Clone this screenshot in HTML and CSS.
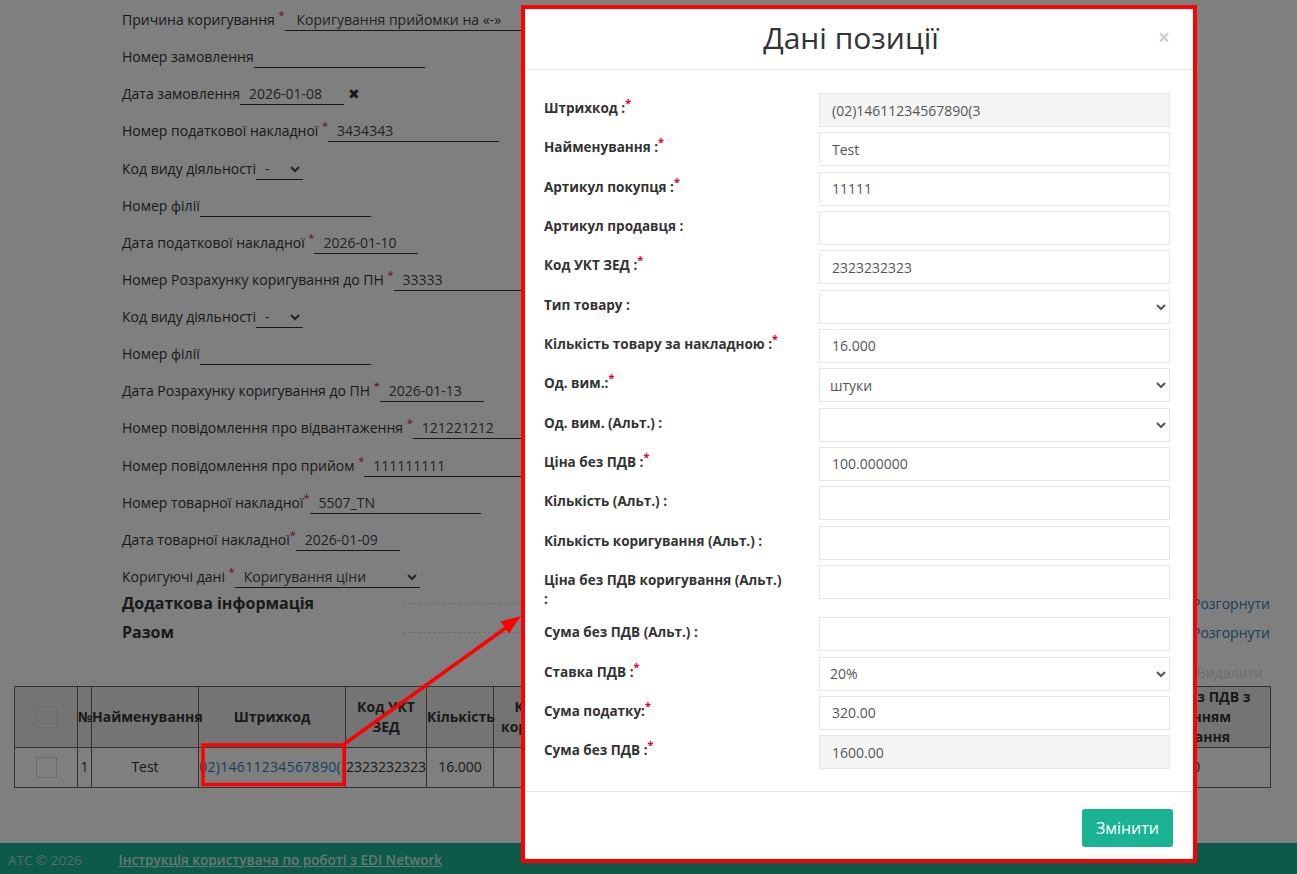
FILE: index.html
```html
<!DOCTYPE html>
<html lang="uk">
<head>
    <meta charset="UTF-8">
    <meta name="viewport" content="width=device-width, initial-scale=1.0">
    <title>Коригування - Дані позиції</title>
    <link rel="stylesheet" href="styles.css">
</head>
<body>
    <div class="page">
        <form class="doc-form">
            <div class="field"><label>Причина коригування <sup class="req">*</sup></label><input class="line-input input-wide" type="text" value="Коригування прийомки на «-»"></div>
            <div class="field"><label>Номер замовлення</label><input class="line-input input-text" type="text" value=""></div>
            <div class="field"><label>Дата замовлення</label><input class="line-input input-date" type="text" value="2026-01-08"><span class="clear-date">✖</span></div>
            <div class="field"><label>Номер податкової накладної <sup class="req">*</sup></label><input class="line-input input-text" type="text" value="3434343"></div>
            <div class="field"><label>Код виду діяльності</label><select class="line-select select-code"><option>-</option></select></div>
            <div class="field"><label>Номер філії</label><input class="line-input input-text" type="text" value=""></div>
            <div class="field"><label>Дата податкової накладної <sup class="req">*</sup></label><input class="line-input input-date" type="text" value="2026-01-10"></div>
            <div class="field"><label>Номер Розрахунку коригування до ПН <sup class="req">*</sup></label><input class="line-input input-text" type="text" value="33333"></div>
            <div class="field"><label>Код виду діяльності</label><select class="line-select select-code"><option>-</option></select></div>
            <div class="field"><label>Номер філії</label><input class="line-input input-text" type="text" value=""></div>
            <div class="field"><label>Дата Розрахунку коригування до ПН <sup class="req">*</sup></label><input class="line-input input-date" type="text" value="2026-01-13"></div>
            <div class="field"><label>Номер повідомлення про відвантаження <sup class="req">*</sup></label><input class="line-input input-text" type="text" value="121221212"></div>
            <div class="field"><label>Номер повідомлення про прийом <sup class="req">*</sup></label><input class="line-input input-text" type="text" value="111111111"></div>
            <div class="field"><label>Номер товарної накладної<sup class="req">*</sup></label><input class="line-input input-text" type="text" value="5507_TN"></div>
            <div class="field"><label>Дата товарної накладної<sup class="req">*</sup></label><input class="line-input input-date" type="text" value="2026-01-09"></div>
            <div class="field"><label>Коригуючі дані <sup class="req">*</sup></label><select class="line-select select-corr"><option>Коригування ціни</option></select></div>
        </form>

        <div class="section-row">
            <h4>Додаткова інформація</h4>
            <span class="dash"></span>
            <a href="#">Розгорнути</a>
        </div>
        <div class="section-row">
            <h4>Разом</h4>
            <span class="dash"></span>
            <a href="#">Розгорнути</a>
        </div>

        <div class="table-actions">
            <span class="delete-link">
                <svg width="10" height="12" viewBox="0 0 10 12"><path d="M1 3h8M3.5 3V1.5h3V3M2 3l.6 8h4.8L8 3" fill="none" stroke="currentColor" stroke-width="1.2"/></svg>Видалити
            </span>
        </div>

        <table class="items">
            <colgroup>
                <col style="width:63px"><col style="width:14px"><col style="width:107px"><col style="width:147px">
                <col style="width:81px"><col style="width:67px"><col style="width:110px"><col style="width:110px">
                <col style="width:110px"><col style="width:110px"><col style="width:81px"><col style="width:80px"><col style="width:176px">
            </colgroup>
            <thead>
                <tr>
                    <th><span class="check"></span></th>
                    <th>№</th>
                    <th>Найменування</th>
                    <th>Штрихкод</th>
                    <th>Код УКТ ЗЕД</th>
                    <th>Кількість</th>
                    <th>Кількість коригування</th>
                    <th>Ціна без ПДВ</th>
                    <th>Ціна коригування</th>
                    <th>Сума без ПДВ</th>
                    <th>Ставка ПДВ</th>
                    <th>Сума ПДВ</th>
                    <th>Вартість без ПДВ з урахуванням коригування</th>
                </tr>
            </thead>
            <tbody>
                <tr>
                    <td><span class="check"></span></td>
                    <td>1</td>
                    <td>Test</td>
                    <td><div class="barcode"><a href="#">(02)14611234567890(3</a></div></td>
                    <td>2323232323</td>
                    <td>16.000</td>
                    <td>0</td>
                    <td>100.000000</td>
                    <td>0</td>
                    <td>1600.00</td>
                    <td>20%</td>
                    <td>320.00</td>
                    <td>0.000</td>
                </tr>
            </tbody>
        </table>
    </div>

    <footer class="site-footer">
        <span class="copy">АТС © 2026</span>
        <a href="#">Інструкція користувача по роботі з EDI Network</a>
    </footer>

    <div class="backdrop"></div>

    <svg class="annotation" width="1297" height="874" viewBox="0 0 1297 874">
        <rect x="203" y="745" width="141" height="39.5" fill="none" stroke="#ff0000" stroke-width="3.5"/>
        <line x1="343" y1="745" x2="507" y2="627" stroke="#ff0000" stroke-width="3.5"/>
        <polygon points="521,616 509,633.5 500.5,621.5" fill="#ff0000"/>
    </svg>

    <div class="modal">
        <div class="modal-header">
            <h4 class="modal-title">Дані позиції</h4>
            <button class="close" type="button">×</button>
        </div>
        <div class="modal-body">
            <label>Штрихкод :<sup class="req">*</sup></label>
            <input class="form-control" type="text" value="(02)14611234567890(3" readonly>

            <label>Найменування :<sup class="req">*</sup></label>
            <input class="form-control" type="text" value="Test">

            <label>Артикул покупця :<sup class="req">*</sup></label>
            <input class="form-control" type="text" value="11111">

            <label>Артикул продавця :</label>
            <input class="form-control" type="text" value="">

            <label>Код УКТ ЗЕД :<sup class="req">*</sup></label>
            <input class="form-control" type="text" value="2323232323">

            <label>Тип товару :</label>
            <select class="form-control"><option></option></select>

            <label>Кількість товару за накладною :<sup class="req">*</sup></label>
            <input class="form-control" type="text" value="16.000">

            <label>Од. вим.:<sup class="req">*</sup></label>
            <select class="form-control"><option>штуки</option></select>

            <label>Од. вим. (Альт.) :</label>
            <select class="form-control"><option></option></select>

            <label>Ціна без ПДВ :<sup class="req">*</sup></label>
            <input class="form-control" type="text" value="100.000000">

            <label>Кількість (Альт.) :</label>
            <input class="form-control" type="text" value="">

            <label>Кількість коригування (Альт.) :</label>
            <input class="form-control" type="text" value="">

            <label>Ціна без ПДВ коригування (Альт.) :</label>
            <input class="form-control" type="text" value="">

            <label>Сума без ПДВ (Альт.) :</label>
            <input class="form-control" type="text" value="">

            <label>Ставка ПДВ :<sup class="req">*</sup></label>
            <select class="form-control"><option>20%</option></select>

            <label>Сума податку:<sup class="req">*</sup></label>
            <input class="form-control" type="text" value="320.00">

            <label>Сума без ПДВ :<sup class="req">*</sup></label>
            <input class="form-control" type="text" value="1600.00" readonly>
        </div>
        <div class="modal-footer">
            <button class="btn-primary" type="button">Змінити</button>
        </div>
    </div>
</body>
</html>
```

FILE: styles.css
```css
body {
    margin: 0;
    font-family: "Open Sans", "Liberation Sans", sans-serif;
    font-size: 14px;
    color: #333;
    background-color: #fff;
    height: 874px;
    overflow: hidden;
}

.page {
    padding: 8px 27px 0 14px;
}

/* document header form */
.doc-form {
    margin: 0 0 0 108px;
    display: flex;
    flex-direction: column;
    gap: 13.13px;
}

.field {
    display: flex;
    align-items: center;
    height: 24px;
}

.field label {
    white-space: nowrap;
    line-height: 20px;
}

.req {
    color: #e4002b;
    font-size: 11px;
    line-height: 0;
    vertical-align: 6px;
}

.field .req {
    color: #d0105a;
}

.line-input,
.line-select {
    font-family: inherit;
    font-size: 14px;
    color: #444;
    height: 22px;
    border: 0;
    border-bottom: 1px solid #333;
    border-radius: 0;
    background: transparent;
    box-sizing: border-box;
    outline: none;
    margin: 0;
}

.line-input {
    padding: 0 0 0 9px;
}

.line-select {
    padding: 0 0 0 5px;
}

.input-wide { width: 300px; padding-left: 12px; }
.input-text { width: 171px; }
.input-date { width: 104px; }
.select-code { width: 47px; }
.select-corr { width: 185px; }

.clear-date {
    margin-left: 4px;
    font-family: "DejaVu Sans", sans-serif;
    font-size: 14px;
    color: #333;
}

.section-row {
    display: flex;
    align-items: center;
    height: 29px;
    margin-left: 108px;
}

.section-row h4 {
    margin: 0;
    width: 281px;
    font-size: 16px;
    font-weight: 700;
}

.section-row .dash {
    flex: 1;
    border-top: 1px dashed #ddd;
    margin-right: 8px;
}

.section-row a {
    color: #337ab7;
    text-decoration: none;
}

.table-actions {
    display: flex;
    justify-content: flex-end;
    align-items: center;
    height: 20px;
    margin-top: 16px;
    padding-right: 7px;
}

.delete-link {
    color: #ddd;
    display: flex;
    align-items: center;
    gap: 1px;
}

/* items table */
.items {
    width: 100%;
    margin-top: 3px;
    border-collapse: collapse;
    table-layout: fixed;
}

.items th,
.items td {
    border: 1px solid #666;
    padding: 0;
    text-align: center;
    line-height: 20px;
}

.items th {
    height: 57px;
    background-color: #e8e8e8;
    font-weight: 700;
}

.items td {
    height: 39px;
    white-space: nowrap;
    overflow: hidden;
    color: #333;
}

.check {
    display: inline-block;
    width: 19px;
    height: 19px;
    border: 1px solid #ddd;
    vertical-align: middle;
}

.barcode {
    display: flex;
    justify-content: center;
    overflow: hidden;
}

.barcode a {
    color: #337ab7;
    text-decoration: none;
    letter-spacing: 0.3px;
    flex-shrink: 0;
}

.site-footer {
    margin-top: 55px;
    height: 34px;
    background-color: #1ab394;
    display: flex;
    align-items: center;
    padding: 0 8px;
    font-size: 13.5px;
}

.site-footer .copy {
    color: rgba(255, 255, 255, 0.6);
}

.site-footer a {
    margin-left: 37px;
    color: rgba(255, 255, 255, 0.8);
    font-weight: 600;
}

/* modal */
.backdrop {
    position: fixed;
    top: 0;
    left: 0;
    right: 0;
    bottom: 0;
    background-color: rgba(0, 0, 0, 0.5);
    z-index: 10;
}

.annotation {
    position: fixed;
    top: 0;
    left: 0;
    z-index: 15;
}

.modal {
    position: fixed;
    top: 5px;
    left: 521px;
    width: 676px;
    box-sizing: border-box;
    border: 4px solid #ff0000;
    background-color: #fff;
    z-index: 20;
}

.modal-header {
    display: flex;
    align-items: center;
    padding: 12px 23px 15px 19px;
    border-bottom: 1px solid #e5e5e5;
}

.modal-title {
    flex: 1;
    margin: 0;
    text-align: center;
    font-size: 30px;
    font-weight: 400;
    line-height: 33px;
    color: #333;
}

.close {
    background: none;
    border: 0;
    padding: 0;
    font-family: inherit;
    font-size: 21px;
    font-weight: 700;
    line-height: 1;
    color: #000;
    opacity: 0.2;
}

.modal-body {
    display: grid;
    grid-template-columns: 240px 351px;
    column-gap: 35px;
    row-gap: 5.33px;
    padding: 23px 23px 22px 19px;
}

.modal-body label {
    font-size: 13.5px;
    font-weight: 700;
    line-height: 19.5px;
    padding: 6px 0 2px;
}

.form-control {
    width: 100%;
    height: 34px;
    box-sizing: border-box;
    border: 1px solid #e5e6e7;
    border-radius: 0;
    padding: 6px 12px;
    font-family: inherit;
    font-size: 14px;
    color: #555;
    background-color: #fff;
    margin: 0;
    outline: none;
}

select.form-control {
    padding: 0 6px;
}

.form-control[readonly] {
    background-color: #f5f5f5;
}

.modal-footer {
    display: flex;
    justify-content: flex-end;
    padding: 17px 20px 12px;
    border-top: 1px solid #e5e5e5;
}

.btn-primary {
    height: 38px;
    padding: 0 14px;
    border: 0;
    border-radius: 3px;
    background-color: #1ab394;
    color: #fff;
    font-family: inherit;
    font-size: 16px;
}
```
